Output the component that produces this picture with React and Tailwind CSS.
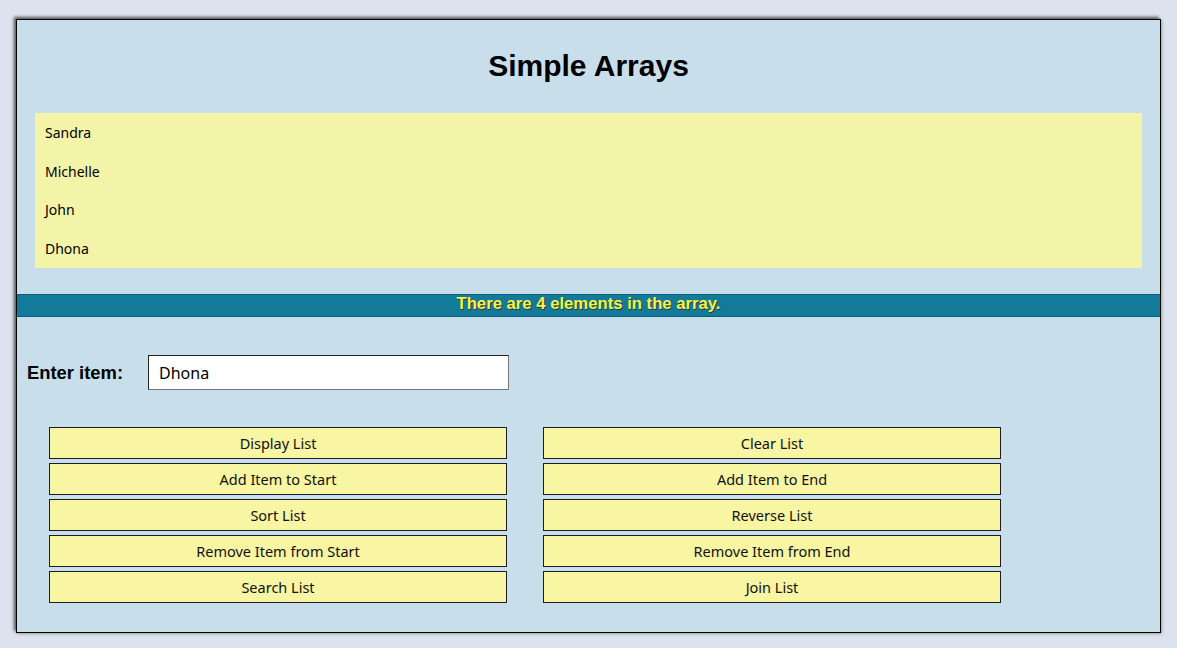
import React from 'react';

const items = ['Sandra', 'Michelle', 'John', 'Dhona'];

const leftButtons = ['Display List', 'Add Item to Start', 'Sort List', 'Remove Item from Start', 'Search List'];
const rightButtons = ['Clear List', 'Add Item to End', 'Reverse List', 'Remove Item from End', 'Join List'];

const uiFont = { fontFamily: '"Noto Sans", "Open Sans", sans-serif' };

const ActionButton = ({ label }) => (
  <button
    className="h-[32px] w-full bg-[#f8f5a3] border border-[#1c1c28] text-[14.5px] text-[#111] leading-none"
    style={uiFont}
  >
    {label}
  </button>
);

export default function App() {
  return (
    <div className="min-h-[648px] bg-[#dde3ee] pt-[19px] pl-[16px] pr-[16px]">
      <div className="w-[1145px] bg-[#c8deea] border border-black shadow-[-2px_-2px_3px_#555,1px_1px_3px_#9aa]">
        <h1
          className="pt-[30px] text-center text-[30px] font-bold leading-[32px] text-black"
          style={{ fontFamily: '"Liberation Sans", Arial, sans-serif' }}
        >
          Simple Arrays
        </h1>

        <ul className="mx-[18px] mt-[31px] h-[155px] flex flex-col bg-[#f4f4a8]" style={uiFont}>
          {items.map((name) => (
            <li key={name} className="flex-1 flex items-center pl-[10px] text-[14px] text-black">
              {name}
            </li>
          ))}
        </ul>

        <div
          className="mt-[26px] h-[23px] pb-[3px] flex items-center justify-center bg-[#147a99] border-y border-[#0c5c7a] text-[16.7px] font-bold text-[#f6f44a] [text-shadow:1px_1px_0_#2a3a30]"
          style={{ fontFamily: '"Liberation Sans", Arial, sans-serif' }}
        >
          There are 4 elements in the array.
        </div>

        <div className="mt-[38px] flex items-center pl-[10px]">
          <label
            className="w-[121px] text-[18.4px] font-bold text-black"
            style={{ fontFamily: '"Liberation Sans", Arial, sans-serif' }}
          >
            Enter item:
          </label>
          <input
            readOnly
            value="Dhona"
            className="h-[35px] w-[361px] bg-white px-[10px] text-[16px] text-black border border-t-[#222] border-l-[#222] border-b-[#777] border-r-[#777] outline-none"
            style={uiFont}
          />
        </div>

        <div className="mt-[37px] mb-[29px] ml-[32px] grid grid-cols-[458px_458px] gap-x-[36px]">
          <div className="flex flex-col gap-[4px]">
            {leftButtons.map((b) => (
              <ActionButton key={b} label={b} />
            ))}
          </div>
          <div className="flex flex-col gap-[4px]">
            {rightButtons.map((b) => (
              <ActionButton key={b} label={b} />
            ))}
          </div>
        </div>
      </div>
    </div>
  );
}
